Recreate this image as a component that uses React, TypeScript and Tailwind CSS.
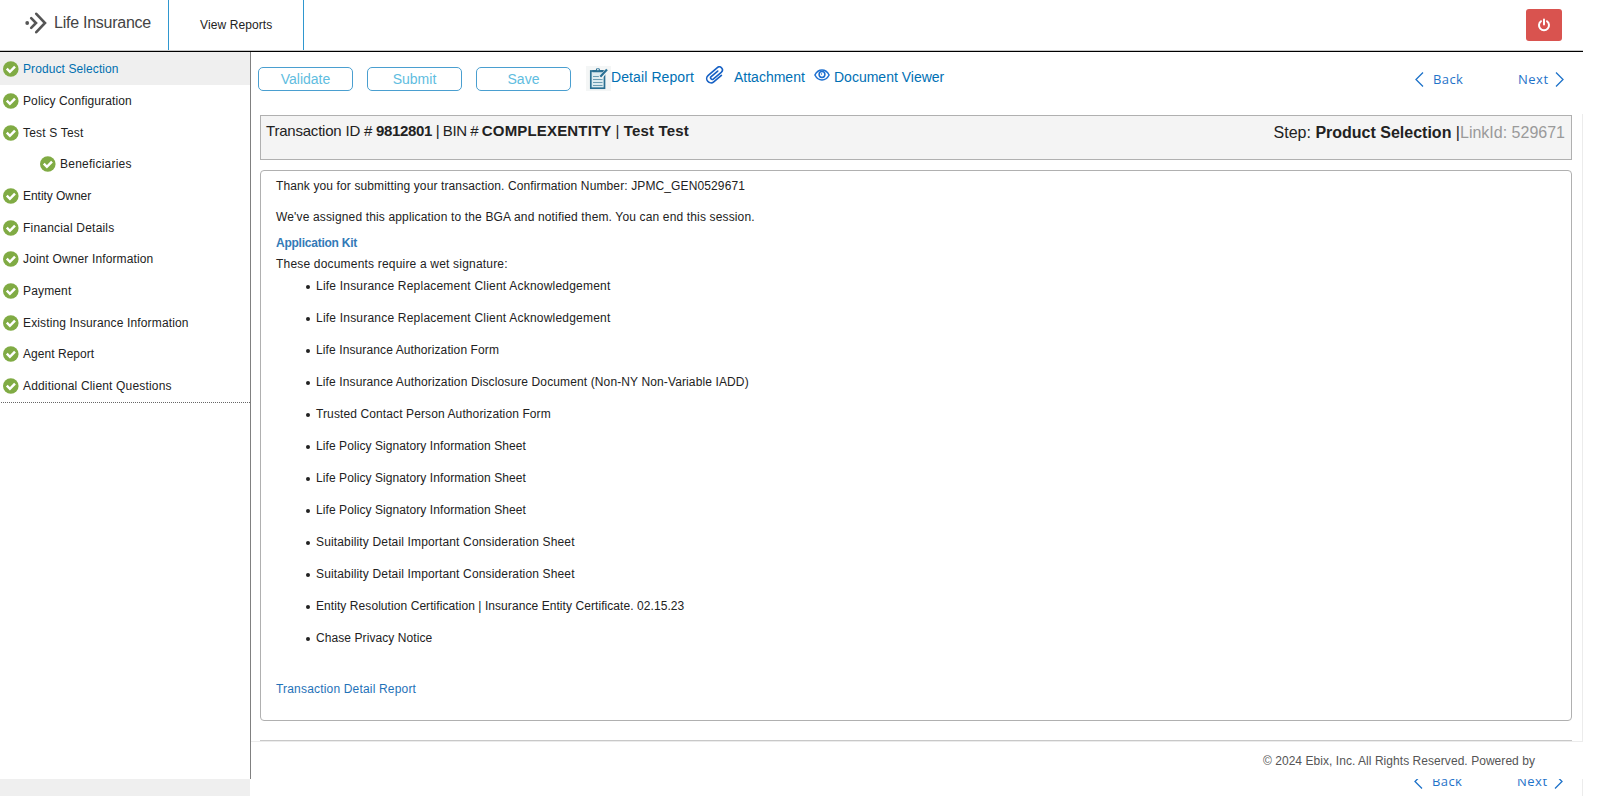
import type { ReactNode } from "react";

const steps = [
  { label: "Product Selection", spacing: "tracking-[0.09px]", active: true },
  { label: "Policy Configuration", spacing: "tracking-[0.1px]" },
  { label: "Test S Test", spacing: "tracking-[0.18px]" },
  { label: "Beneficiaries", spacing: "tracking-[0.23px]", child: true },
  { label: "Entity Owner", spacing: "tracking-[-0.04px]" },
  { label: "Financial Details", spacing: "tracking-[0.2px]" },
  { label: "Joint Owner Information", spacing: "tracking-[0.13px]" },
  { label: "Payment", spacing: "tracking-[0.15px]" },
  { label: "Existing Insurance Information", spacing: "tracking-[0.14px]" },
  { label: "Agent Report", spacing: "tracking-[0.04px]" },
  { label: "Additional Client Questions", spacing: "tracking-[0.17px]" },
];

const documents = [
  { title: "Life Insurance Replacement Client Acknowledgement", spacing: "tracking-[0.21px]" },
  { title: "Life Insurance Replacement Client Acknowledgement", spacing: "tracking-[0.21px]" },
  { title: "Life Insurance Authorization Form", spacing: "tracking-[0.11px]" },
  {
    title: "Life Insurance Authorization Disclosure Document (Non-NY Non-Variable IADD)",
    spacing: "tracking-[0.12px]",
  },
  { title: "Trusted Contact Person Authorization Form", spacing: "tracking-[0.11px]" },
  { title: "Life Policy Signatory Information Sheet", spacing: "tracking-[0.08px]" },
  { title: "Life Policy Signatory Information Sheet", spacing: "tracking-[0.08px]" },
  { title: "Life Policy Signatory Information Sheet", spacing: "tracking-[0.08px]" },
  { title: "Suitability Detail Important Consideration Sheet", spacing: "tracking-[0.15px]" },
  { title: "Suitability Detail Important Consideration Sheet", spacing: "tracking-[0.15px]" },
  {
    title: "Entity Resolution Certification | Insurance Entity Certificate. 02.15.23",
    spacing: "tracking-[0.07px]",
  },
  { title: "Chase Privacy Notice", spacing: "tracking-[0.08px]" },
];

function LogoMark() {
  return (
    <svg width="22" height="22" viewBox="0 0 22 22" fill="none" stroke="#555" strokeWidth="2.6" strokeLinecap="round">
      <circle cx="2.2" cy="11" r="1.9" fill="#555" stroke="none" />
      <path d="M6.2 6.2 11 11l-4.8 4.8" />
      <path d="M11.3 1.8 20 11l-8.7 9.2" />
    </svg>
  );
}

function CheckIcon() {
  return (
    <svg width="16" height="16" viewBox="0 0 16 16" fill="none">
      <circle cx="7.800" cy="8" r="7.800" fill="#80ab44" />
      <path d="M3.800 7.700 6.900 10.800 12 5.700" stroke="#fff" strokeWidth="2.500" />
    </svg>
  );
}

function PowerIcon() {
  return (
    <svg width="14" height="14" viewBox="0 0 14 14" fill="none" stroke="#fff" strokeWidth="2" strokeLinecap="round">
      <path d="M4 3.200a5 5 0 1 0 6 0M7 1.500v5" />
    </svg>
  );
}

function ClipboardIcon() {
  return (
    <svg width="25" height="25" viewBox="0 0 25 25" fill="none">
      <rect width="25" height="25" fill="#f4f6f6" />
      <rect x="4.800" y="5" width="13.700" height="17.200" fill="#dcebf0" stroke="#2a6f92" strokeWidth="1.700" />
      <path d="M6.500 6.300V4h3.300a2.100 2.100 0 0 1 4.200 0h3v2.300z" fill="#2a6f92" />
      <circle cx="11.900" cy="3.400" r="0.900" fill="#dcebf0" />
      <path d="M7 10.500h7M7 13.500h9.500M7 16.500h9.500M7 19.500h9.500" stroke="#6b9cb2" strokeWidth="1.200" />
      <path d="M14 12 21 4" stroke="#f4f6f6" strokeWidth="3.600" />
      <path d="M14.300 10.800 21 3.600" stroke="#2a7195" strokeWidth="2.200" />
    </svg>
  );
}

function PaperclipIcon() {
  return (
    <svg width="20" height="19" viewBox="0 0 20 19" fill="none" stroke="#1560c4" strokeWidth="1.700" strokeLinecap="round">
      <path
        transform="translate(10 9.200) rotate(-40) scale(.95) translate(-11 -6)"
        d="M16 10.500H5.500a4.500 4.500 0 0 1 0-9H18a3.200 3.200 0 0 1 0 6.400H7a1.700 1.700 0 0 1 0-3.400H16"
      />
    </svg>
  );
}

function EyeIcon() {
  return (
    <svg width="16" height="12" viewBox="0 0 16 12" fill="none" stroke="#1c6fd0" strokeWidth="1.500">
      <path d="M.9 6C2.600 2.700 5 1 8 1s5.400 1.700 7.100 5C13.400 9.300 11 11 8 11S2.600 9.300.9 6z" />
      <circle cx="8" cy="5.500" r="2.900" />
      <circle cx="7.500" cy="5" r="0.700" fill="#1c6fd0" stroke="none" />
    </svg>
  );
}

function Chevron({ d }: { d: string }) {
  return (
    <svg width="9" height="15" viewBox="0 0 9 15" fill="none" stroke="#1f73c9" strokeWidth="1.300">
      <path d={d} />
    </svg>
  );
}

function StepNav() {
  return (
    <div className="flex h-[16px] items-center font-['Open_Sans','Noto_Sans',sans-serif] text-[13px] leading-[16px] text-[#1f73c9]">
      <Chevron d="M8 .5 1 7.500 8 14.500" />
      <span className="-mt-px ml-[9px] w-[31px] tracking-[0.400px]">Back</span>
      <span className="ml-[54px] w-[32px] tracking-[0.500px]">Next</span>
      <span className="ml-[5px]">
        <Chevron d="M1 .5 8 7.500 1 14.500" />
      </span>
    </div>
  );
}

function ActionButton({ children }: { children: ReactNode }) {
  return (
    <button className="h-[24px] w-[95px] rounded-[5px] border border-[#4a9fd0] text-[14px] leading-[22px] text-[#5fbde0]">
      {children}
    </button>
  );
}

export default function App() {
  return (
    <div className="flex h-[796px] w-[1600px] flex-col overflow-hidden bg-white font-['Liberation_Sans',Arial,sans-serif] text-[12px] text-[#222]">
      <header className="flex h-[52px] w-[1583px] shrink-0 flex-col">
        <div className="flex h-[50px] items-stretch">
          <div className="flex w-[169px] items-center border-r border-[#2f97cf] pb-[5px] pl-[25px]">
            <LogoMark />
            <span className="ml-[7px] whitespace-nowrap text-[16px] tracking-[-0.25px] text-[#444]">Life Insurance</span>
          </div>
          <div className="flex w-[135px] items-center border-r border-[#2f97cf] pl-[31px] tracking-[0.1px]">
            View Reports
          </div>
          <div className="flex flex-1 items-center justify-end pr-[21px]">
            <button className="flex h-[32px] w-[36px] items-center justify-center rounded-[3px] bg-[#d9534f]">
              <PowerIcon />
            </button>
          </div>
        </div>
        <div className="h-px bg-[#c8c8c8]" />
        <div className="h-px bg-black" />
      </header>

      <div className="flex flex-1">
        <aside className="flex w-[251px] shrink-0 flex-col">
          <nav className="h-[727px] border-r border-[#808080]">
            <ul>
              {steps.map((s) => (
                <li
                  key={s.label}
                  className={
                    s.active
                      ? "flex h-[33px] items-center bg-[#efefef] pl-[3px] text-[#0070b0]"
                      : s.child
                        ? "flex h-[31.700px] items-center pl-[40px]"
                        : "flex h-[31.700px] items-center pl-[3px]"
                  }
                >
                  <CheckIcon />
                  <span className={`ml-[4px] ${s.spacing}`}>{s.label}</span>
                </li>
              ))}
            </ul>
            <div className="ml-px border-t border-dotted border-[#666]" />
          </nav>
          <div className="h-[17px] w-[250px] bg-[#efefef]" />
        </aside>

        <main className="flex w-[1332px] flex-col">
          <div className="flex h-[62px] items-start pl-[7px] pt-[15px]">
            <div className="flex gap-[14px]">
              <ActionButton>Validate</ActionButton>
              <ActionButton>Submit</ActionButton>
              <ActionButton>Save</ActionButton>
            </div>
            <div className="-mt-px ml-[15px] flex text-[14px] leading-[22px] text-[#0070b4]">
              <ClipboardIcon />
              <span className="w-[94px] tracking-[0.1px]">Detail Report</span>
              <PaperclipIcon />
              <span className="ml-[9px] w-[80px]">Attachment</span>
              <span className="mt-[3px]">
                <EyeIcon />
              </span>
              <span className="ml-[4px]">Document Viewer</span>
            </div>
            <div className="ml-auto mr-[19px] mt-[4px]">
              <StepNav />
            </div>
          </div>

          <div className="flex h-[628px] flex-col border-b border-r border-[#ececec] pl-[9px] pr-[10px] pt-px">
            <div className="flex h-[45px] shrink-0 justify-between border border-[#b0b0b0] bg-[#f4f4f4] pl-[5px] pr-[6px]">
              <p className="pt-[6px] text-[15px] leading-[18px]">
                <span className="tracking-[-0.21px]">Transaction ID # </span>
                <b className="tracking-[-0.36px]">9812801</b>
                <span className="tracking-[-0.45px]"> | BIN # </span>
                <b className="tracking-[0.16px]">COMPLEXENTITY</b> | <b className="tracking-[0.17px]">Test Test</b>
              </p>
              <p className="pt-[8px] text-[16px] leading-[18px]">
                Step: <b>Product Selection</b> |<span className="text-[#9a9a9a]">LinkId: 529671</span>
              </p>
            </div>

            <section className="mt-[10px] h-[551px] shrink-0 rounded-[4px] border border-[#b0b0b0] pl-[15px] leading-[16px]">
              <p className="mt-[7px] tracking-[0.12px]">
                Thank you for submitting your transaction. Confirmation Number: JPMC_GEN0529671
              </p>
              <p className="mt-[15px] tracking-[0.15px]">
                We&#39;ve assigned this application to the BGA and notified them. You can end this session.
              </p>
              <p className="mt-[10px] font-bold tracking-[-0.24px] text-[#337ab7]">Application Kit</p>
              <p className="mt-[5px] tracking-[0.19px]">These documents require a wet signature:</p>
              <ul className="mt-[6px] flex flex-col gap-[16px] pl-[30px]">
                {documents.map((d, i) => (
                  <li key={i} className="flex items-center">
                    <span className="mr-[6px] mt-px size-[4px] rounded-full bg-[#222]" />
                    <span className={d.spacing}>{d.title}</span>
                  </li>
                ))}
              </ul>
              <p className="mt-[35px] tracking-[0.18px] text-[#1f72b8]">Transaction Detail Report</p>
            </section>
            <div className="mt-auto h-px bg-[#c8c8c8]" />
          </div>

          <footer className="flex h-[37px] justify-end pr-[48px] pt-[11px] leading-[16px] tracking-[0.05px] text-[#555]">
            © 2024 Ebix, Inc. All Rights Reserved. Powered by
          </footer>
          <div className="flex h-[17px] items-start justify-end overflow-hidden border-r border-[#ececec] pr-[19px]">
            <div className="-mt-[6px]">
              <StepNav />
            </div>
          </div>
        </main>
      </div>
    </div>
  );
}
